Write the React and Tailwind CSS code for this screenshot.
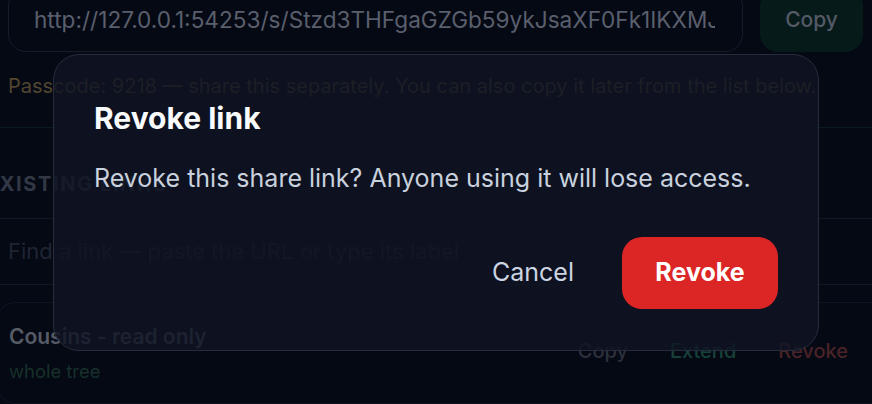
import React from "react";

export default function App() {
  return (
    <div
      className="relative w-[872px] h-[404px] overflow-hidden bg-[#050914]"
      style={{ fontFamily: "Inter, 'Noto Sans', sans-serif" }}
    >
      {/* page behind the dialog */}
      <div className="flex flex-col">
        <div className="pl-[8px] pr-[9px] pb-[27px] border-b border-[#0b1a1b]">
          <div className="flex h-[64px] mt-[-12px] gap-[17px]">
            <div className="flex-1 min-w-0 flex items-center border border-[#161c2a] rounded-[18px] pl-[25px] pr-[27px]">
              <span className="block overflow-hidden text-clip text-[22.6px] text-[#5a5f6d] whitespace-nowrap">
                http://127.0.0.1:54253/s/Stzd3THFgaGZGb59ykJsaXF0Fk1IKXMJ7yQ
              </span>
            </div>
            <div className="w-[103px] flex items-center justify-center rounded-[18px] bg-[#061a1a] text-[21px] font-medium text-[#545966]">
              Copy
            </div>
          </div>
          <p className="mt-[20px] leading-[28px] text-[20px] text-[#524630] whitespace-nowrap">
            Passcode: 9218 — share this separately. You can also copy it later from the list below.
          </p>
        </div>
        <div className="mt-[42px] pb-[20px] border-b border-[#111725]">
          <h2 className="ml-[-14px] leading-[28px] text-[20px] font-bold tracking-[0.08em] text-[#323846] whitespace-nowrap">
            EXISTING LINKS
          </h2>
        </div>
        <div className="h-[66px] flex items-center pl-[8px] border-b border-[#111725]">
          <span className="text-[22px] text-[#1f2433] whitespace-nowrap">
            Find a link — paste the URL or type its label
          </span>
        </div>
        <div className="mt-[17px] ml-[-2px] mr-[-20px] rounded-[16px] border border-[#0f1422] pl-[10px] pr-[43px] pt-[20px] pb-[20px] flex items-start">
          <div className="flex-1 flex flex-col">
            <span className="leading-[28px] text-[21px] font-semibold text-[#555b67] whitespace-nowrap">
              Cousins - read only
            </span>
            <span className="mt-[8px] leading-[24px] text-[18.4px] text-[#17302a]">whole tree</span>
          </div>
          <div className="flex items-center gap-[42px] mt-[13px] text-[20px] font-medium">
            <span className="text-[#2c313c]">Copy</span>
            <span className="text-[#17423a]">Extend</span>
            <span className="text-[#4a2328]">Revoke</span>
          </div>
        </div>
      </div>

      {/* dialog */}
      <div className="absolute inset-0 flex items-center justify-center">
        <div className="w-[766px] h-[297px] rounded-[26px] border border-[#262c3b] bg-[#0f1423]/80 px-[40px] pt-[43px] flex flex-col">
          <h3 className="text-[30px] leading-[40px] font-bold text-[#f8fafc]">Revoke link</h3>
          <p className="mt-[24px] text-[25px] leading-[32px] text-[#c8d1dd] whitespace-nowrap">
            Revoke this share link? Anyone using it will lose access.
          </p>
          <div className="mt-[43px] flex justify-end items-center gap-[16px]">
            <button className="h-[72px] px-[32px] text-[25px] text-[#cbd5e1]">Cancel</button>
            <button className="h-[72px] w-[156px] rounded-[20px] bg-[#dc2626] text-[25px] font-bold text-white">
              Revoke
            </button>
          </div>
        </div>
      </div>
    </div>
  );
}
